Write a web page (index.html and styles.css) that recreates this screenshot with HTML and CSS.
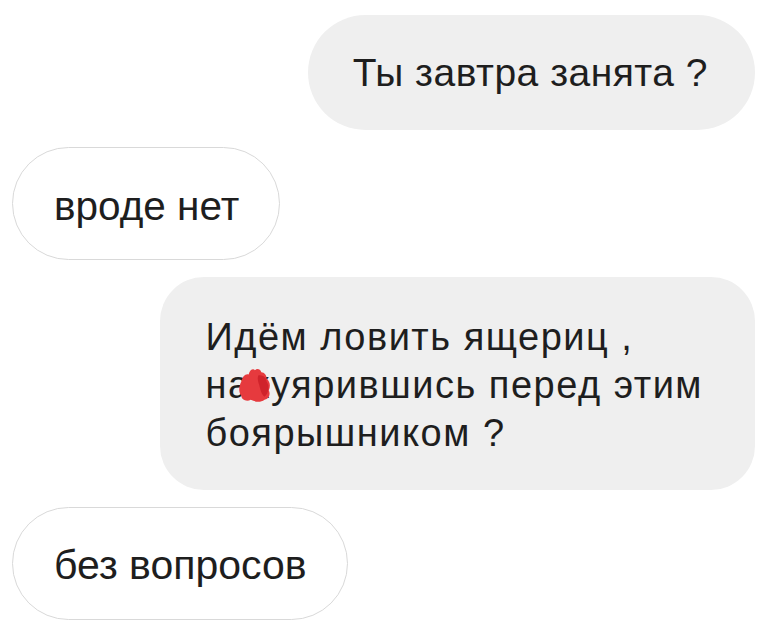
FILE: index.html
```html
<!DOCTYPE html>
<html lang="ru">
<head>
<meta charset="utf-8">
<title>Чат</title>
<link rel="stylesheet" href="styles.css">
</head>
<body>
<div class="chat">
  <div class="bubble out pill b1">Ты завтра занята ?</div>
  <div class="bubble in pill b2">вроде нет</div>
  <div class="bubble out block b3">Идём ловить ящериц ,<br>на<span class="censor">х<svg class="blot" viewBox="0 0 34 34" aria-hidden="true"><path d="M4 14 C5 9 8 6 11 7 C12 3 15 1 17 3 C19 1 22 2 23 5 C26 5 28 8 28 11 C31 13 32 18 30 22 C32 26 30 30 26 31 C22 34 17 33 13 31 C9 33 4 31 4 27 C1 23 2 18 4 14 Z" fill="#e63a3e"/><path d="M20 8 C24 7 28 10 28 14 C31 18 30 25 26 28 C23 26 22 21 21 17 C20 14 19 11 20 8 Z" fill="#d0232b"/></svg></span>уярившись перед этим<br>боярышником ?</div>
  <div class="bubble in pill b4">без вопросов</div>
</div>
</body>
</html>
```
FILE: styles.css
```css
html, body {
  margin: 0;
  background: #ffffff;
}

.chat {
  display: flex;
  flex-direction: column;
  gap: 17px;
  padding: 15px 24px 0 12px;
}

.bubble {
  font-family: "Liberation Sans", Arial, sans-serif;
  color: #1e1e1e;
  box-sizing: border-box;
}

.pill {
  display: flex;
  align-items: center;
  border-radius: 999px;
  white-space: nowrap;
}

.out {
  align-self: flex-end;
  background: #efefef;
}

.in {
  align-self: flex-start;
  background: #ffffff;
  border: 1.5px solid #d9d9d9;
}

.b1 {
  height: 115px;
  font-size: 39px;
  letter-spacing: 0.5px;
  padding: 0 47px 0 45px;
}

.b2 {
  height: 113px;
  font-size: 40.5px;
  padding: 6px 40px 0 41px;
}

.b3 {
  border-radius: 44px;
  font-size: 38px;
  letter-spacing: 1.5px;
  line-height: 48px;
  padding: 36px 52px 33px 45px;
  white-space: nowrap;
}

.b4 {
  height: 113px;
  font-size: 41px;
  padding: 4px 40px 0 41px;
}

.censor {
  position: relative;
}

.blot {
  position: absolute;
  left: -14px;
  top: 3px;
  width: 36px;
  height: 36px;
}
```
